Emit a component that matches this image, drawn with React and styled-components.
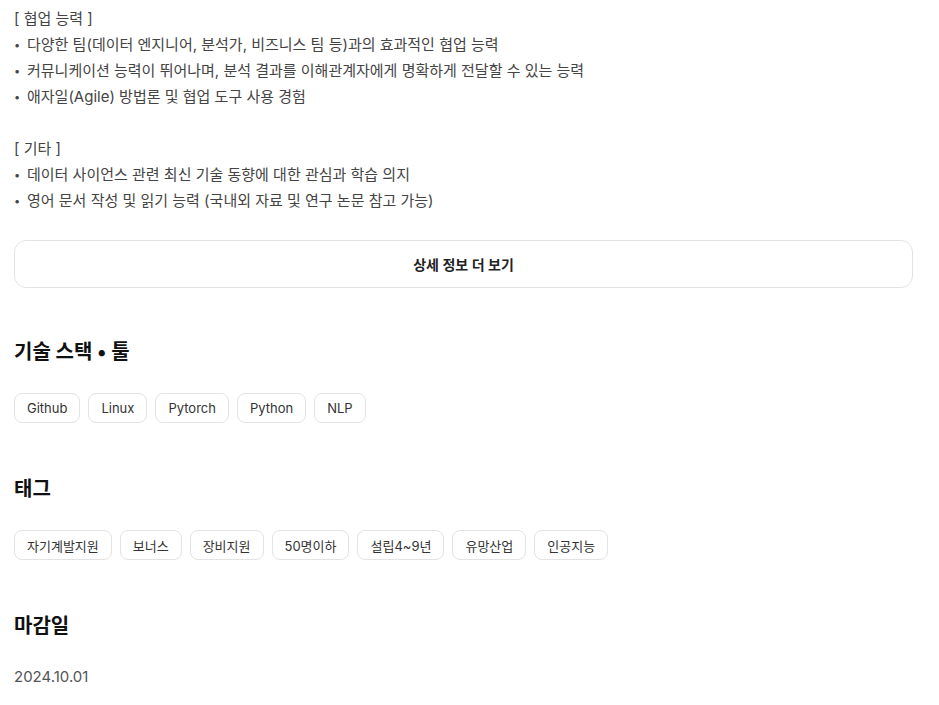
import styled, { createGlobalStyle } from "styled-components";

const GlobalStyle = createGlobalStyle`
  body {
    margin: 0;
    background: #fff;
    font-family: Inter, "Noto Sans CJK KR", "Noto Sans", sans-serif;
    color: #333;
  }
`;

const Page = styled.div`
  width: 899px;
  padding: 6px 0 20px 14px;
`;

const Description = styled.div`
  font-size: 15px;
  line-height: 26px;
  color: #444;
`;

const Line = styled.div`
  min-height: 26px;
  white-space: nowrap;
`;

const Bullet = styled.span`
  display: inline-block;
  width: 13px;
  font-size: 11px;
  vertical-align: 1px;
`;

const MoreButton = styled.button`
  display: block;
  width: 100%;
  height: 48px;
  margin-top: 26px;
  background: #fff;
  border: 1px solid #e3e3e3;
  border-radius: 12px;
  font-family: inherit;
  font-size: 14px;
  font-weight: 600;
  color: #222;
  cursor: pointer;
`;

const Section = styled.section`
  margin-top: ${(p) => p.$top || 50}px;
`;

const Heading = styled.h2`
  margin: 0;
  font-size: 20px;
  line-height: 28px;
  font-weight: 700;
  color: #111;
`;

const ChipRow = styled.div`
  display: flex;
  flex-wrap: wrap;
  gap: 8px;
  margin-top: 27px;
`;

const Chip = styled.span`
  display: inline-flex;
  align-items: center;
  height: 30px;
  box-sizing: border-box;
  padding: 0 12px;
  border: 1px solid #e3e3e3;
  border-radius: 8px;
  font-size: 13px;
  color: #333;
`;

const DateText = styled.div`
  margin-top: 26px;
  font-size: 15px;
  line-height: 22px;
  color: #555;
`;

const lines = [
  "[ 협업 능력 ]",
  "• 다양한 팀(데이터 엔지니어, 분석가, 비즈니스 팀 등)과의 효과적인 협업 능력",
  "• 커뮤니케이션 능력이 뛰어나며, 분석 결과를 이해관계자에게 명확하게 전달할 수 있는 능력",
  "• 애자일(Agile) 방법론 및 협업 도구 사용 경험",
  "",
  "[ 기타 ]",
  "• 데이터 사이언스 관련 최신 기술 동향에 대한 관심과 학습 의지",
  "• 영어 문서 작성 및 읽기 능력 (국내외 자료 및 연구 논문 참고 가능)",
];

const stack = ["Github", "Linux", "Pytorch", "Python", "NLP"];
const tags = ["자기계발지원", "보너스", "장비지원", "50명이하", "설립4~9년", "유망산업", "인공지능"];

export default function App() {
  return (
    <>
      <GlobalStyle />
      <Page>
        <Description>
          {lines.map((l, i) =>
            l.startsWith("• ") ? (
              <Line key={i}>
                <Bullet>•</Bullet>
                {l.slice(2)}
              </Line>
            ) : (
              <Line key={i}>{l}</Line>
            )
          )}
        </Description>
        <MoreButton>상세 정보 더 보기</MoreButton>

        <Section>
          <Heading>기술 스택 • 툴</Heading>
          <ChipRow>
            {stack.map((s) => (
              <Chip key={s}>{s}</Chip>
            ))}
          </ChipRow>
        </Section>

        <Section $top={52}>
          <Heading>태그</Heading>
          <ChipRow>
            {tags.map((t) => (
              <Chip key={t}>{t}</Chip>
            ))}
          </ChipRow>
        </Section>

        <Section $top={52}>
          <Heading>마감일</Heading>
          <DateText>2024.10.01</DateText>
        </Section>
      </Page>
    </>
  );
}
